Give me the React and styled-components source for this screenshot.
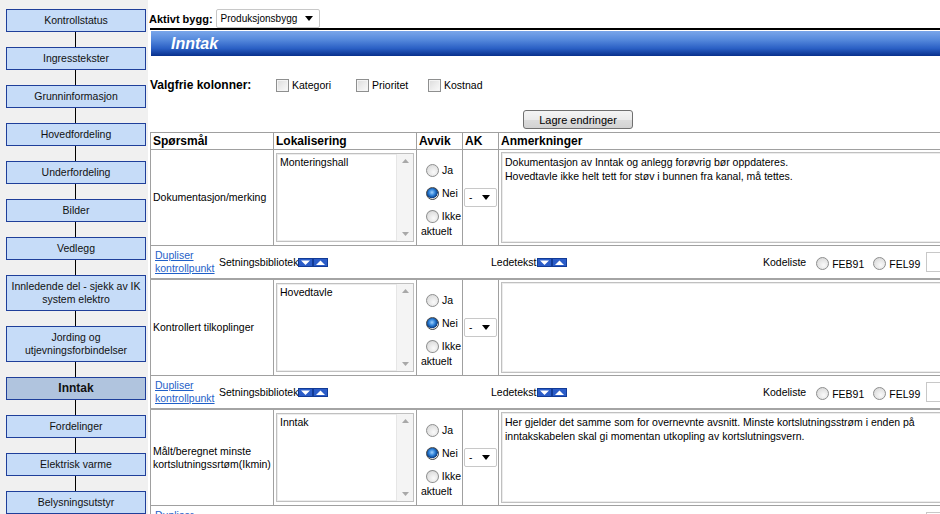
import React from 'react';
import styled, { createGlobalStyle } from 'styled-components';

const GlobalStyle = createGlobalStyle`
  html, body {
    margin: 0;
    padding: 0;
    background: #fff;
    overflow: hidden;
  }
  body {
    font-family: "Liberation Sans", Arial, sans-serif;
    font-size: 10.5px;
    color: #000;
  }
`;

const Page = styled.div`
  display: flex;
  width: 940px;
  height: 514px;
  overflow: hidden;
`;

const Sidebar = styled.nav`
  flex: 0 0 148px;
  background: #f0f0f0;
  padding: 9px 0 0 6px;
  box-sizing: border-box;
  display: flex;
  flex-direction: column;
  align-items: flex-start;
`;

const NavButton = styled.div`
  width: 140px;
  box-sizing: border-box;
  border: 1px solid #1f3f9a;
  background: ${p => (p.$active ? '#b0c4de' : '#c6dcf8')};
  padding: 4px 2px;
  line-height: 13px;
  text-align: center;
  white-space: pre-line;
  font-size: ${p => (p.$active ? '12px' : '10.5px')};
  font-weight: ${p => (p.$active ? 'bold' : 'normal')};
  color: #111;
`;

const Connector = styled.div`
  width: 1px;
  height: 15px;
  background: #000;
  margin-left: 69px;
`;

const Main = styled.main`
  flex: 1;
  min-width: 0;
  overflow: hidden;
`;

const TopBar = styled.div`
  display: flex;
  align-items: center;
  gap: 3px;
  height: 28px;
  padding: 9px 0 0 1px;
  box-sizing: border-box;
`;

const BoldLabel = styled.span`
  font-weight: bold;
  font-size: ${p => p.$size || '11px'};
`;

const FakeSelect = styled.div`
  display: flex;
  align-items: center;
  justify-content: space-between;
  width: ${p => p.$w}px;
  height: 19px;
  box-sizing: border-box;
  border: 1px solid #c8c8c8;
  border-radius: 2px;
  background: #fff;
  padding: 0 6px 0 4px;
  font-size: 10px;
  white-space: nowrap;
`;

const Arrow = () => (
  <svg width="8" height="5" viewBox="0 0 8 5">
    <polygon points="0,0 8,0 4,5" fill="#000" />
  </svg>
);

const TitleWrap = styled.div`
  margin-left: 2px;
  border-top: 2px solid #000;
  padding: 1px 0 0 1px;
`;

const TitleBar = styled.div`
  height: 25px;
  display: flex;
  align-items: center;
  padding-left: 20px;
  background: linear-gradient(#7aa6ea 0%, #5589dc 35%, #2a5fc4 70%, #08308c 100%);
  color: #fff;
  font-weight: bold;
  font-style: italic;
  font-size: 16px;
`;

const OptionsRow = styled.div`
  display: flex;
  align-items: center;
  height: 16px;
  margin: 21px 0 0 2px;
`;

const OptionsLabel = styled(BoldLabel)`
  width: 126px;
`;

const CheckGroup = styled.label`
  display: flex;
  align-items: center;
  gap: 3px;
  width: ${p => p.$w}px;
  font-size: 10.5px;
`;

const Check = styled.input.attrs({ type: 'checkbox' })`
  appearance: none;
  width: 13px;
  height: 13px;
  margin: 0;
  border: 1px solid #8e8f8f;
  background: linear-gradient(135deg, #dcdcdc, #fbfbfb);
  box-shadow: inset 0 0 0 1px #f4f4f4;
`;

const SaveRow = styled.div`
  margin: 17px 0 3px 375px;
`;

const SaveButton = styled.button`
  width: 110px;
  height: 19px;
  border: 1px solid #707070;
  border-radius: 3px;
  background: linear-gradient(#f4f4f4 0%, #ebebeb 50%, #dcdcdc 51%, #d2d2d2 100%);
  font-family: inherit;
  font-size: 11px;
  padding: 0;
`;

const Table = styled.table`
  margin-left: 2px;
  width: 1000px;
  table-layout: fixed;
  border-collapse: collapse;
  border: 1px solid #a0a0a0;
  font-size: 10.5px;
`;

const Th = styled.th`
  border: 1px solid #a0a0a0;
  text-align: left;
  font-size: 12px;
  font-weight: bold;
  padding: 0 2px;
  height: 16px;
`;

const Td = styled.td`
  border: 1px solid #a0a0a0;
  vertical-align: middle;
  padding: ${p => p.$pad || '2px'};
  line-height: 13px;
`;

const DupTd = styled.td`
  border: 1px solid #a0a0a0;
  border-bottom: 2px solid #a4a4a4;
  padding: 3px 5px 3px 4px;
  height: 26px;
  box-sizing: border-box;
`;

const LocBox = styled.div`
  display: flex;
  width: 138px;
  height: 89px;
  box-sizing: border-box;
  border: 1px solid #c0c0c0;
  box-shadow: inset 0 0 0 1px #ececec;
`;

const LocText = styled.textarea`
  flex: 1;
  min-width: 0;
  border: none;
  resize: none;
  outline: none;
  background: transparent;
  font-family: inherit;
  font-size: 10.5px;
  line-height: 13px;
  padding: 2px 3px;
  overflow: hidden;
`;

const ScrollTrack = styled.div`
  width: 16px;
  background: #f4f4f4;
  border-left: 1px solid #e6e6e6;
  display: flex;
  flex-direction: column;
  justify-content: space-between;
  align-items: center;
  padding: 5px 0;
`;

const NoteText = styled.textarea`
  display: block;
  width: 100%;
  height: 91px;
  box-sizing: border-box;
  border: 1px solid #c0c0c0;
  box-shadow: inset 0 0 0 1px #ececec;
  resize: none;
  outline: none;
  font-family: inherit;
  font-size: 10.5px;
  line-height: 14px;
  padding: 2px 3px;
  overflow: hidden;
`;

const RadioLine = styled.div`
  display: flex;
  align-items: center;
  height: 23px;
  white-space: nowrap;
`;

const Radio = styled.input.attrs({ type: 'radio' })`
  appearance: none;
  width: 13px;
  height: 13px;
  margin: 0 3px 0 ${p => p.$ml || '5px'};
  border-radius: 50%;
  border: 1px solid #8e8f8f;
  box-sizing: border-box;
  background: radial-gradient(circle at 60% 65%, #fafafa 0%, #e2e2e2 60%, #cfcfcf 100%);
  &:checked {
    background: radial-gradient(circle at 45% 40%, #9fd2ff 0%, #2c7fd6 35%, #0b3f86 62%, #e4e4e4 66%, #d0d0d0 100%);
    border-color: #4a4a4a;
  }
`;

const WrapLabel = styled.div`
  line-height: 12px;
  margin-top: -3px;
`;

const DupRow = styled.div`
  display: flex;
  align-items: center;
`;

const DupLink = styled.a`
  width: 64px;
  color: #1f5fc8;
  text-decoration: underline;
  line-height: 13px;
`;

const Tool = styled.div`
  display: flex;
  align-items: center;
  width: ${p => p.$w}px;
`;

const Kode = styled.div`
  display: flex;
  align-items: center;
`;

const KodeOpt = styled.label`
  display: flex;
  align-items: center;
  margin-left: ${p => p.$ml}px;
  padding-top: 3px;
`;

const SmallInput = styled.div`
  width: 40px;
  height: 20px;
  border: 1px solid #c8c8c8;
  margin-left: 6px;
  box-sizing: border-box;
`;

const SortIcons = () => (
  <svg width="30" height="9" viewBox="0 0 30 9">
    <rect x="0.5" y="0.5" width="14" height="8" fill="#2a5cc8" stroke="#123b96" />
    <polygon points="3,2.5 12,2.5 7.5,7" fill="#fff" />
    <rect x="15.5" y="0.5" width="14" height="8" fill="#2a5cc8" stroke="#123b96" />
    <polygon points="18,7 27,7 22.5,2.5" fill="#fff" />
  </svg>
);

const ScrollArrow = ({ up }) => (
  <svg width="7" height="4" viewBox="0 0 7 4">
    <polygon points={up ? '0,4 7,4 3.5,0' : '0,0 7,0 3.5,4'} fill="#a8a8a8" />
  </svg>
);

const navItems = [
  'Kontrollstatus',
  'Ingresstekster',
  'Grunninformasjon',
  'Hovedfordeling',
  'Underfordeling',
  'Bilder',
  'Vedlegg',
  'Innledende del - sjekk av IK\nsystem elektro',
  'Jording og\nutjevningsforbindelser',
  'Inntak',
  'Fordelinger',
  'Elektrisk varme',
  'Belysningsutstyr',
];

const rows = [
  {
    q: 'Dokumentasjon/merking',
    loc: 'Monteringshall',
    note: 'Dokumentasjon av Inntak og anlegg forøvrig bør oppdateres.\nHovedtavle ikke helt tett for støv i bunnen fra kanal, må tettes.',
  },
  { q: 'Kontrollert tilkoplinger', loc: 'Hovedtavle', note: '' },
  {
    q: 'Målt/beregnet minste kortslutningssrtøm(Ikmin)',
    loc: 'Inntak',
    note: 'Her gjelder det samme som for overnevnte avsnitt. Minste kortslutningsstrøm i enden på\ninntakskabelen skal gi momentan utkopling av kortslutningsvern.',
  },
];

const DuplicateRow = ({ id }) => (
  <tr>
    <DupTd colSpan={5}>
      <DupRow>
        <DupLink href="#">Dupliser kontrollpunkt</DupLink>
        <Tool $w={272}>Setningsbibliotek<SortIcons /></Tool>
        <Tool $w={272}>Ledetekst<SortIcons /></Tool>
        <Kode>
          Kodeliste
          <KodeOpt $ml={0}><Radio name={'kode' + id} $ml="10px" />FEB91</KodeOpt>
          <KodeOpt $ml={6}><Radio name={'kode' + id} $ml="3px" />FEL99</KodeOpt>
          <SmallInput />
        </Kode>
      </DupRow>
    </DupTd>
  </tr>
);

const App = () => {
  return (
    <>
      <GlobalStyle />
      <Page>
        <Sidebar>
          {navItems.map((item, i) => (
            <div key={item}>
              {i > 0 && <Connector />}
              <NavButton $active={item === 'Inntak'}>{item}</NavButton>
            </div>
          ))}
        </Sidebar>
        <Main>
          <TopBar>
            <BoldLabel>Aktivt bygg:</BoldLabel>
            <FakeSelect $w={104}>Produksjonsbygg<Arrow /></FakeSelect>
          </TopBar>
          <TitleWrap>
            <TitleBar>Inntak</TitleBar>
          </TitleWrap>
          <OptionsRow>
            <OptionsLabel $size="12px">Valgfrie kolonner:</OptionsLabel>
            <CheckGroup $w={80}><Check />Kategori</CheckGroup>
            <CheckGroup $w={72}><Check />Prioritet</CheckGroup>
            <CheckGroup $w={70}><Check />Kostnad</CheckGroup>
          </OptionsRow>
          <SaveRow>
            <SaveButton>Lagre endringer</SaveButton>
          </SaveRow>
          <Table>
            <colgroup>
              <col style={{ width: 123 }} />
              <col style={{ width: 143 }} />
              <col style={{ width: 46 }} />
              <col style={{ width: 36 }} />
              <col />
            </colgroup>
            <thead>
              <tr>
                <Th>Spørsmål</Th>
                <Th>Lokalisering</Th>
                <Th>Avvik</Th>
                <Th>AK</Th>
                <Th>Anmerkninger</Th>
              </tr>
            </thead>
            <tbody>
              {rows.map((r, i) => (
                <React.Fragment key={i}>
                  <tr>
                    <Td>{r.q}</Td>
                    <Td>
                      <LocBox>
                        <LocText defaultValue={r.loc} />
                        <ScrollTrack>
                          <ScrollArrow up />
                          <ScrollArrow />
                        </ScrollTrack>
                      </LocBox>
                    </Td>
                    <Td $pad="0 1px 0 4px">
                      <RadioLine><Radio name={'avvik' + i} />Ja</RadioLine>
                      <RadioLine><Radio name={'avvik' + i} defaultChecked />Nei</RadioLine>
                      <RadioLine><Radio name={'avvik' + i} />Ikke</RadioLine>
                      <WrapLabel>aktuelt</WrapLabel>
                    </Td>
                    <Td $pad="1px">
                      <FakeSelect $w={33}>-<Arrow /></FakeSelect>
                    </Td>
                    <Td>
                      <NoteText defaultValue={r.note} />
                    </Td>
                  </tr>
                  <DuplicateRow id={i} />
                </React.Fragment>
              ))}
            </tbody>
          </Table>
        </Main>
      </Page>
    </>
  );
};

export default App;
